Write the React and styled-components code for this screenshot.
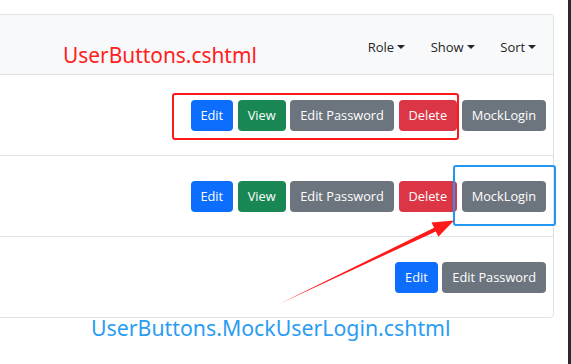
import React from "react";
import styled, { createGlobalStyle } from "styled-components";

const GlobalStyle = createGlobalStyle`
  html, body {
    margin: 0;
    padding: 0;
    background: #fff;
  }
  body {
    font-family: "Open Sans", "Liberation Sans", sans-serif;
  }
`;

const Window = styled.div`
  display: flex;
  width: 571px;
  height: 364px;
  overflow: hidden;
`;

const Screen = styled.div`
  position: relative;
  flex: 1;
  padding: 14px 14px 0 0;
  background: #fff;
`;

const Edge = styled.div`
  width: 3px;
  background: #2a2a2a;
`;

const Card = styled.div`
  margin-left: -10px;
  border: 1px solid #dfe2e5;
  border-radius: 4px;
  background: #fff;
`;

const Header = styled.div`
  display: flex;
  align-items: center;
  justify-content: space-between;
  height: 59px;
  padding: 0 4px 0 72px;
  background: #f8f9fa;
  border-bottom: 1px solid #dfe2e5;
  border-radius: 4px 4px 0 0;
`;

const Label = styled.div`
  font-family: "Noto Sans", "Liberation Sans", sans-serif;
  font-size: ${(p) => p.size}px;
  line-height: 21px;
  color: ${(p) => p.color};
  white-space: nowrap;
`;

const RedLabel = styled(Label)`
  margin-top: 22px;
`;

const BlueLabel = styled(Label)`
  margin: -1px 0 0 91px;
`;

const Nav = styled.ul`
  display: flex;
  list-style: none;
  margin: 0;
  padding: 0;
  margin-top: 5px;
`;

const NavItem = styled.li`
  padding: 0 12.8px;
  font-size: 13px;
  color: #252525;
  &::after {
    content: "";
    display: inline-block;
    margin-left: 3px;
    vertical-align: 3px;
    border-top: 4px solid #252525;
    border-left: 4px solid transparent;
    border-right: 4px solid transparent;
  }
`;

const Row = styled.div`
  display: flex;
  justify-content: flex-end;
  align-items: center;
  gap: 4.75px;
  height: 80px;
  padding-right: 7px;
  border-bottom: ${(p) => (p.last ? "none" : "1px solid #dfe2e5")};
`;

const colors = {
  primary: "#0d6efd",
  success: "#198754",
  secondary: "#6c757d",
  danger: "#dc3545",
};

const Button = styled.button`
  height: 31px;
  padding: 0 9.9px;
  border: none;
  border-radius: 4px;
  background: ${(p) => colors[p.variant]};
  color: #fff;
  font-family: "Open Sans", "Liberation Sans", sans-serif;
  font-size: 12.8px;
  white-space: nowrap;
`;

const Box = styled.div`
  position: absolute;
  border: 2px solid ${(p) => p.color};
  border-radius: 3px;
  pointer-events: none;
`;

const Arrow = styled.svg`
  position: absolute;
  left: 0;
  top: 0;
  pointer-events: none;
`;

const fullButtons = (
  <>
    <Button variant="primary">Edit</Button>
    <Button variant="success">View</Button>
    <Button variant="secondary">Edit Password</Button>
    <Button variant="danger">Delete</Button>
    <Button variant="secondary">MockLogin</Button>
  </>
);

export default function App() {
  return (
    <>
      <GlobalStyle />
      <Window>
        <Screen>
          <Card>
            <Header>
              <RedLabel color="#ff2020" size={20.9}>
                UserButtons.cshtml
              </RedLabel>
              <Nav>
                <NavItem>Role</NavItem>
                <NavItem>Show</NavItem>
                <NavItem>Sort</NavItem>
              </Nav>
            </Header>
            <Row>{fullButtons}</Row>
            <Row>{fullButtons}</Row>
            <Row last>
              <Button variant="primary">Edit</Button>
              <Button variant="secondary">Edit Password</Button>
            </Row>
          </Card>
          <BlueLabel color="#2b9cf2" size={21.3}>
            UserButtons.MockUserLogin.cshtml
          </BlueLabel>

          <Box color="#ff1a1a" style={{ left: 172, top: 93, width: 283, height: 43 }} />
          <Box color="#2196f3" style={{ left: 453, top: 165, width: 99, height: 57 }} />
          <Arrow width="571" height="364" viewBox="0 0 571 364">
            <polygon
              fill="#ff1a1a"
              points="279,304 434.1,227.8 431.5,222.4 454,220.5 438.4,236.8 435.8,231.4"
            />
          </Arrow>
        </Screen>
        <Edge />
      </Window>
    </>
  );
}
